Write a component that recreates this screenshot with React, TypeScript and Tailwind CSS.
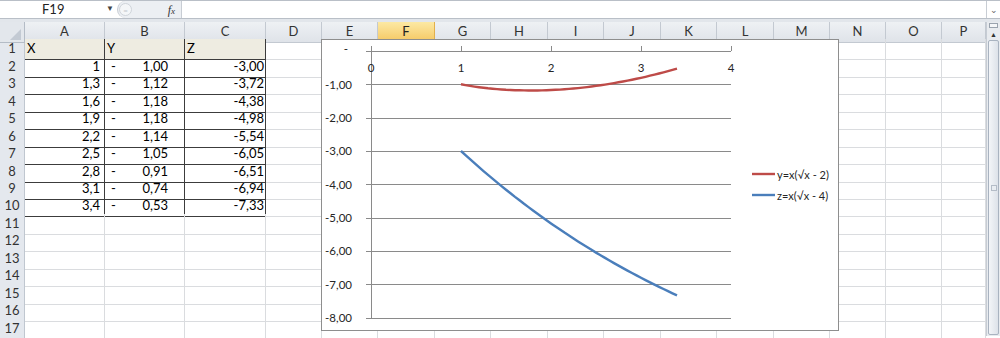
import React from 'react';

const cols = ['A', 'B', 'C', 'D', 'E', 'F', 'G', 'H', 'I', 'J', 'K', 'L', 'M', 'N', 'O', 'P'];
const gridCols = 'grid grid-cols-[25px_80px_80px_81px_56px_56px_57px_56px_57px_56px_57px_56px_57px_56px_56px_56px_44px]';

// row heights alternate so borders land on whole pixels (~17.4px per row)
const rowH = [
    'h-[18px]', 'h-[17px]', 'h-[18px]', 'h-[17px]', 'h-[18px]', 'h-[17px]', 'h-[18px]', 'h-[17px]', 'h-[17px]',
    'h-[18px]', 'h-[17px]', 'h-[18px]', 'h-[17px]', 'h-[18px]', 'h-[17px]', 'h-[18px]', 'h-[17px]',
];

const data = [
    { x: '1', y: '1,00', z: '-3,00' },
    { x: '1,3', y: '1,12', z: '-3,72' },
    { x: '1,6', y: '1,18', z: '-4,38' },
    { x: '1,9', y: '1,18', z: '-4,98' },
    { x: '2,2', y: '1,14', z: '-5,54' },
    { x: '2,5', y: '1,05', z: '-6,05' },
    { x: '2,8', y: '0,91', z: '-6,51' },
    { x: '3,1', y: '0,74', z: '-6,94' },
    { x: '3,4', y: '0,53', z: '-7,33' },
];

const thin = 'border-r border-b border-[#dadcdf]';
const dark = 'border-r border-b border-[#3c3c3c]';

const FormulaBar: React.FC = () => (
    <div className="flex h-[19px] border-t border-b border-[#b9bfc7] bg-white">
        <div className="relative w-[117px] h-full flex items-center text-[13px] text-[#222]">
            <span className="pl-[42px]">F19</span>
            <span className="absolute left-[106px] top-[1px] text-[8px] text-[#444]">▼</span>
        </div>
        <div className="w-[64px] h-full bg-[#eceff3] rounded-l-full flex items-center border-l border-[#c8cdd4]">
            <div className="w-[13px] h-[13px] ml-[1px] rounded-full border border-[#cfd4da] bg-[#f4f6f8] flex items-center justify-center text-[8px] text-[#c2c7cd]">=</div>
            <span className="ml-auto mr-[6px] text-[12px] italic text-[#333] font-['Liberation_Serif',serif]">f<span className="text-[9px]">x</span></span>
        </div>
        <div className="flex-1 border-l border-[#c8cdd4] bg-white" />
        <div className="w-[14px] flex items-center justify-center text-[9px] text-[#666] border-l border-[#c8cdd4]">⌄</div>
    </div>
);

const ColumnHeaders: React.FC = () => (
    <div className={`${gridCols} h-[17px]`}>
        <div className="relative bg-[#e3e7ec] border-r border-b border-[#b4bcc6]">
            <svg className="absolute right-[3px] bottom-[2px]" width="11" height="11" viewBox="0 0 11 11">
                <polygon points="11,0 11,11 0,11" fill="#c3cad3" />
            </svg>
        </div>
        {cols.map(c => (
            <div
                key={c}
                className={c === 'F'
                    ? 'flex items-center justify-center bg-gradient-to-b from-[#fce9a3] to-[#f5c760] border-r border-b border-[#e2b04c] text-[13px] text-[#222]'
                    : 'flex items-center justify-center bg-gradient-to-b from-[#eef1f4] to-[#dfe3e9] border-r border-b border-[#c3c9d1] text-[13px] text-[#333]'}
            >
                {c}
            </div>
        ))}
    </div>
);

const SheetRow: React.FC<{ r: number }> = ({ r }) => {
    const inTable = r <= 10;
    const item = r >= 2 && r <= 10 ? data[r - 2] : null;
    const tableCell = inTable ? dark : thin;
    const head = r === 1 ? 'bg-[#eeece1]' : '';
    return (
        <div className={`${gridCols} ${rowH[r - 1]} text-[13px] text-black`}>
            <div className="flex items-center justify-center bg-[#e4e8ee] border-r border-b border-[#c0c7d0] text-[#333]">{r}</div>
            <div className={`${tableCell} ${head} flex items-center ${r === 1 ? 'justify-start pl-[2px]' : 'justify-end pr-[4px]'}`}>
                {r === 1 ? 'X' : item?.x}
            </div>
            <div className={`${tableCell} ${head} flex items-center justify-between pl-[6px] pr-[16px]`}>
                {r === 1 ? <span className="-ml-[4px]">Y</span> : item ? (<><span>-</span><span>{item.y}</span></>) : null}
            </div>
            <div className={`${tableCell} ${head} flex items-center ${r === 1 ? 'justify-start pl-[2px]' : 'justify-end pr-[1px]'}`}>
                {r === 1 ? 'Z' : item?.z}
            </div>
            {cols.slice(3).map(c => (
                <div key={c} className={thin} />
            ))}
        </div>
    );
};

// chart coordinates are page pixels; the <g> shifts them into the chart box
const X0 = 371;
const XU = 90;
const Y0 = 51;
const YU = 33.33;

const curve = (k: number) => {
    const pts: string[] = [];
    for (let i = 0; i <= 48; i++) {
        const x = 1 + (2.4 * i) / 48;
        const v = x * (Math.sqrt(x) - k);
        pts.push(`${(X0 + x * XU).toFixed(1)},${(Y0 - v * YU).toFixed(1)}`);
    }
    return 'M' + pts.join(' L');
};

const Chart: React.FC = () => {
    const yLabels = ['-1,00', '-2,00', '-3,00', '-4,00', '-5,00', '-6,00', '-7,00', '-8,00'];
    return (
        <div className="absolute left-[321px] top-[17px] w-[518px] h-[292px] bg-white border border-[#8e8e8e]">
            <svg width="516" height="290" className="block font-['Lato',sans-serif]">
                <g transform="translate(-322,-40)">
                    {/* horizontal gridlines */}
                    {[1, 2, 3, 4, 5, 6, 7, 8].map(i => (
                        <line key={i} x1={X0} x2={X0 + 4 * XU} y1={Math.round(Y0 + i * YU) + 0.5} y2={Math.round(Y0 + i * YU) + 0.5} stroke="#8a8a8a" strokeWidth="1" />
                    ))}
                    {/* x axis at top */}
                    <line x1={X0} x2={X0 + 4 * XU} y1={Y0 + 0.5} y2={Y0 + 0.5} stroke="#8a8a8a" />
                    {[0, 1, 2, 3, 4].map(i => (
                        <line key={i} x1={X0 + i * XU + 0.5} x2={X0 + i * XU + 0.5} y1={Y0 - 5} y2={Y0} stroke="#8a8a8a" />
                    ))}
                    {/* y axis */}
                    <line x1={X0 + 0.5} x2={X0 + 0.5} y1={Y0} y2={Math.round(Y0 + 8 * YU) + 1} stroke="#8a8a8a" />
                    {[0, 1, 2, 3, 4, 5, 6, 7, 8].map(i => (
                        <line key={i} x1={X0 - 5} x2={X0} y1={Math.round(Y0 + i * YU) + 0.5} y2={Math.round(Y0 + i * YU) + 0.5} stroke="#8a8a8a" />
                    ))}
                    {[0, 1, 2, 3, 4].map(i => (
                        <text key={i} x={X0 + i * XU} y={67} textAnchor="middle" dominantBaseline="central" fontSize="11.5" fill="#262626">{i}</text>
                    ))}
                    <text x={348} y={48} textAnchor="end" dominantBaseline="central" fontSize="11.5" fill="#262626">-</text>
                    {yLabels.map((t, i) => (
                        <text key={t} x={352} y={Y0 + (i + 1) * YU} textAnchor="end" dominantBaseline="central" fontSize="11.5" fill="#262626">{t}</text>
                    ))}
                    <path d={curve(2)} fill="none" stroke="#be4b48" strokeWidth="2.4" />
                    <path d={curve(4)} fill="none" stroke="#4a7ebb" strokeWidth="2.4" />
                    {/* legend */}
                    <line x1={752} x2={775} y1={174} y2={174} stroke="#be4b48" strokeWidth="2.4" />
                    <text x={777} y={174} dominantBaseline="central" fontSize="11" fill="#262626">y=x(√x - 2)</text>
                    <line x1={752} x2={775} y1={195} y2={195} stroke="#4a7ebb" strokeWidth="2.4" />
                    <text x={777} y={195} dominantBaseline="central" fontSize="11" fill="#262626">z=x(√x - 4)</text>
                </g>
            </svg>
        </div>
    );
};

const ScrollBar: React.FC = () => (
    <div className="w-[14px] flex flex-col bg-[#e8ebef] border-l border-[#c6ccd4]">
        <div className="h-[5px] mx-[2px] mt-[1px] border border-[#9aa3ae] bg-[#f4f6f8]" />
        <div className="h-[12px] flex items-center justify-center text-[7px] text-[#333]">▲</div>
        <div className="flex-1 mx-[1px] mb-[1px] rounded-[2px] border border-[#a9b3c0] bg-gradient-to-r from-[#f3f5f8] to-[#dde2e9] flex items-center justify-center">
            <div className="w-[6px] h-[6px] border border-[#b4bcc7] bg-[#e9edf2]" />
        </div>
    </div>
);

export default function App() {
    const rows = Array.from({ length: 17 }, (_, i) => i + 1);
    return (
        <div className="w-[1000px] h-[338px] overflow-hidden bg-white font-['Lato','Liberation_Sans',sans-serif]">
            <FormulaBar />
            <div className="h-[3px] bg-[#e2e6eb]" />
            <div className="flex">
                <div className="relative w-[986px]">
                    <ColumnHeaders />
                    {rows.map(r => (
                        <SheetRow key={r} r={r} />
                    ))}
                    <Chart />
                </div>
                <ScrollBar />
            </div>
        </div>
    );
}
